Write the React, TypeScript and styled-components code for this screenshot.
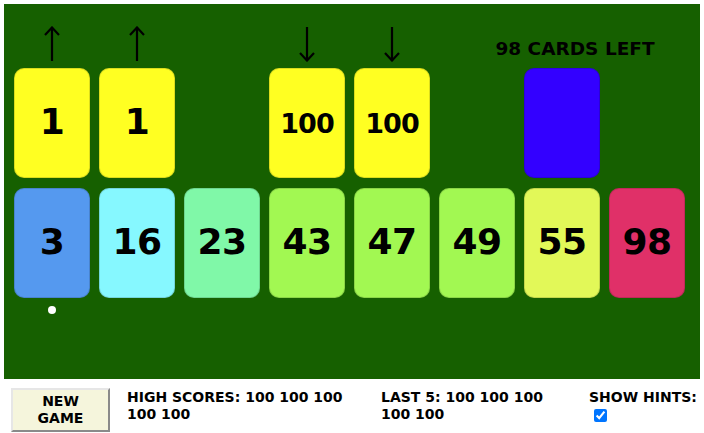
import React from "react";
import styled, { createGlobalStyle } from "styled-components";

const GlobalStyle = createGlobalStyle`
  html, body { margin: 0; padding: 0; background: #ffffff; }
  body { padding: 4px; font-family: "DejaVu Sans", Verdana, sans-serif; color: #000; }
`;

const Board = styled.div`
  width: 696px;
  height: 375px;
  box-sizing: border-box;
  background: #166000;
  padding: 0 10px;
  display: flex;
  flex-direction: column;
`;

const Row = styled.div`
  display: grid;
  grid-template-columns: repeat(8, 76px);
  column-gap: 9px;
`;

const Slot = styled.div`
  display: flex;
  flex-direction: column;
  align-items: center;
`;

const HintArea = styled.div`
  height: 64px;
  width: 100%;
  display: flex;
  align-items: flex-end;
  justify-content: center;
`;

const ArrowWrap = styled.div`
  height: 36px;
  margin-bottom: 6px;
  display: flex;
`;

const DeckLabel = styled.div`
  white-space: nowrap;
  font-weight: bold;
  font-size: 18.5px;
  line-height: 22px;
  padding-left: 26px;
  margin-bottom: 8px;
`;

const Card = styled.div<{ $bg: string; $small?: boolean }>`
  width: 76px;
  height: 110px;
  box-sizing: border-box;
  border-radius: 10px;
  border: 1px solid rgba(0, 0, 0, 0.14);
  background: ${(p) => p.$bg};
  display: flex;
  align-items: center;
  justify-content: center;
  font-weight: bold;
  font-size: ${(p) => (p.$small ? "27px" : "36px")};
  letter-spacing: ${(p) => (p.$small ? "-1px" : "-0.5px")};
  padding-bottom: ${(p) => (p.$small ? "0" : "3px")};
`;

const HandRow = styled(Row)`
  margin-top: 10px;
`;

const MarkerRow = styled(Row)`
  margin-top: 8px;
`;

const Dot = styled.div`
  width: 8px;
  height: 8px;
  border-radius: 50%;
  background: #ffffff;
`;

const Controls = styled.div`
  display: grid;
  grid-template-columns: 100px 238px 192px auto;
  column-gap: 16px;
  padding: 9px 0 0 7px;
  align-items: start;
`;

const NewGameButton = styled.button`
  width: 99px;
  height: 44px;
  background: #f5f5dc;
  border: 2px solid;
  border-color: #e6e6e6 #8a8a8a #8a8a8a #e6e6e6;
  font-family: "DejaVu Sans", Verdana, sans-serif;
  font-weight: bold;
  font-size: 14px;
  line-height: 17px;
  padding: 0 10px;
  color: #000;
`;

const Info = styled.div`
  font-weight: bold;
  font-size: 14px;
  line-height: 17px;
  padding-top: 1px;
`;

const HintToggle = styled.label`
  font-weight: bold;
  font-size: 14px;
  line-height: 17px;
  padding-top: 1px;
  display: block;
  white-space: nowrap;
`;

const Check = styled.input`
  display: block;
  margin: 3px 0 0 5px;
  width: 13px;
  height: 13px;
`;

function Arrow({ up }: { up: boolean }) {
  return (
    <svg width="16" height="36" viewBox="0 0 16 36">
      <g stroke="#000" strokeWidth="2.2" fill="none" strokeLinecap="butt">
        <line x1="8" y1="1" x2="8" y2="35" />
        {up ? (
          <polyline points="1,9 8,1.5 15,9" />
        ) : (
          <polyline points="1,27 8,34.5 15,27" />
        )}
      </g>
    </svg>
  );
}

type Pile = { value: number | null; dir: "up" | "down" | null };

const piles: Pile[] = [
  { value: 1, dir: "up" },
  { value: 1, dir: "up" },
  { value: null, dir: null },
  { value: 100, dir: "down" },
  { value: 100, dir: "down" },
  { value: null, dir: null },
];

const hand: { value: number; color: string }[] = [
  { value: 3, color: "#5599ef" },
  { value: 16, color: "#86f8ff" },
  { value: 23, color: "#80f8a8" },
  { value: 43, color: "#a2f852" },
  { value: 47, color: "#a2f852" },
  { value: 49, color: "#a2f852" },
  { value: 55, color: "#e2f858" },
  { value: 98, color: "#e03068" },
];

export default function App() {
  return (
    <>
      <GlobalStyle />
      <Board>
        <Row>
          {piles.map((p, i) => (
            <Slot key={i}>
              <HintArea>
                {p.dir && (
                  <ArrowWrap>
                    <Arrow up={p.dir === "up"} />
                  </ArrowWrap>
                )}
              </HintArea>
              {p.value !== null && (
                <Card $bg="#ffff22" $small={p.value >= 100}>
                  {p.value}
                </Card>
              )}
            </Slot>
          ))}
          <Slot>
            <HintArea>
              <DeckLabel>98 CARDS LEFT</DeckLabel>
            </HintArea>
            <Card $bg="#3300ff" />
          </Slot>
          <Slot />
        </Row>
        <HandRow>
          {hand.map((c, i) => (
            <Card key={i} $bg={c.color}>
              {c.value}
            </Card>
          ))}
        </HandRow>
        <MarkerRow>
          <Slot>
            <Dot />
          </Slot>
        </MarkerRow>
      </Board>
      <Controls>
        <NewGameButton>NEW GAME</NewGameButton>
        <Info>HIGH SCORES: 100 100 100 100 100</Info>
        <Info>LAST 5: 100 100 100 100 100</Info>
        <HintToggle>
          SHOW HINTS:
          <Check type="checkbox" defaultChecked />
        </HintToggle>
      </Controls>
    </>
  );
}
